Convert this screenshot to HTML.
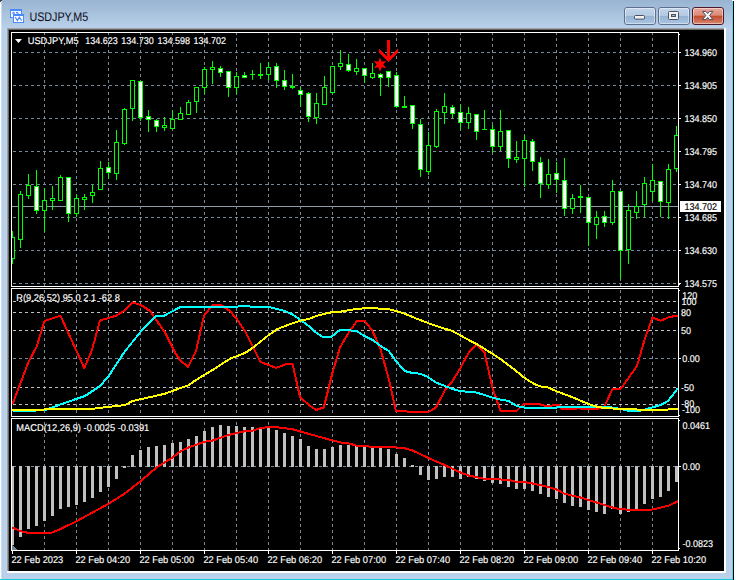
<!DOCTYPE html>
<html><head><meta charset="utf-8"><title>USDJPY,M5</title>
<style>html,body{margin:0;padding:0;background:#fff;}svg{display:block;}text{font-family:"Liberation Sans",sans-serif;white-space:pre;text-rendering:geometricPrecision;}</style>
</head><body>
<svg width="736" height="580" viewBox="0 0 736 580">
<defs>
<linearGradient id="tb" x1="0" y1="0" x2="0" y2="1"><stop offset="0" stop-color="#99b4d1"/><stop offset="1" stop-color="#b9d1ea"/></linearGradient>
<linearGradient id="bt" x1="0" y1="0" x2="0" y2="1"><stop offset="0" stop-color="#c3d6ea"/><stop offset="0.48" stop-color="#b3cae3"/><stop offset="0.5" stop-color="#96b2d3"/><stop offset="1" stop-color="#aac6e3"/></linearGradient>
<linearGradient id="cl" x1="0" y1="0" x2="0" y2="1"><stop offset="0" stop-color="#e9ab9e"/><stop offset="0.46" stop-color="#dc8a78"/><stop offset="0.5" stop-color="#c24a2c"/><stop offset="1" stop-color="#d98a72"/></linearGradient>
</defs>
<rect x="0" y="0" width="736" height="580" fill="#ffffff" />
<rect x="1" y="0" width="731" height="28" fill="url(#tb)" />
<rect x="1" y="28" width="731" height="551" fill="#b9d1ea" />
<rect x="1" y="0" width="1" height="579" fill="#c9dcf0" />
<rect x="732" y="0" width="1" height="580" fill="#55d7fa" />
<rect x="733" y="0" width="1" height="580" fill="#000000" />
<rect x="0" y="579" width="733" height="1" fill="#1ec8e1" />
<rect x="0" y="0" width="2" height="1" fill="#444" />
<rect x="0" y="1" width="1" height="1" fill="#444" />
<rect x="732" y="0" width="2" height="1" fill="#fff" />
<rect x="7" y="28" width="719" height="545" fill="#ffffff" />
<rect x="7" y="28" width="717" height="543" fill="#a0a0a0" />
<rect x="8" y="29" width="716" height="542" fill="#696969" />
<rect x="9" y="30" width="715" height="541" fill="#000000" />
<g shape-rendering="crispEdges">
<line x1="44.5" y1="33" x2="44.5" y2="286" stroke="#778899" stroke-width="1" stroke-dasharray="3 3" stroke-dashoffset="1"/>
<line x1="44.5" y1="289" x2="44.5" y2="416" stroke="#778899" stroke-width="1" stroke-dasharray="3 3" stroke-dashoffset="5"/>
<line x1="44.5" y1="419" x2="44.5" y2="550" stroke="#778899" stroke-width="1" stroke-dasharray="3 3" stroke-dashoffset="3"/>
<line x1="76.5" y1="33" x2="76.5" y2="286" stroke="#778899" stroke-width="1" stroke-dasharray="3 3" stroke-dashoffset="1"/>
<line x1="76.5" y1="289" x2="76.5" y2="416" stroke="#778899" stroke-width="1" stroke-dasharray="3 3" stroke-dashoffset="5"/>
<line x1="76.5" y1="419" x2="76.5" y2="550" stroke="#778899" stroke-width="1" stroke-dasharray="3 3" stroke-dashoffset="3"/>
<line x1="108.5" y1="33" x2="108.5" y2="286" stroke="#778899" stroke-width="1" stroke-dasharray="3 3" stroke-dashoffset="1"/>
<line x1="108.5" y1="289" x2="108.5" y2="416" stroke="#778899" stroke-width="1" stroke-dasharray="3 3" stroke-dashoffset="5"/>
<line x1="108.5" y1="419" x2="108.5" y2="550" stroke="#778899" stroke-width="1" stroke-dasharray="3 3" stroke-dashoffset="3"/>
<line x1="140.5" y1="33" x2="140.5" y2="286" stroke="#778899" stroke-width="1" stroke-dasharray="3 3" stroke-dashoffset="1"/>
<line x1="140.5" y1="289" x2="140.5" y2="416" stroke="#778899" stroke-width="1" stroke-dasharray="3 3" stroke-dashoffset="5"/>
<line x1="140.5" y1="419" x2="140.5" y2="550" stroke="#778899" stroke-width="1" stroke-dasharray="3 3" stroke-dashoffset="3"/>
<line x1="172.5" y1="33" x2="172.5" y2="286" stroke="#778899" stroke-width="1" stroke-dasharray="3 3" stroke-dashoffset="1"/>
<line x1="172.5" y1="289" x2="172.5" y2="416" stroke="#778899" stroke-width="1" stroke-dasharray="3 3" stroke-dashoffset="5"/>
<line x1="172.5" y1="419" x2="172.5" y2="550" stroke="#778899" stroke-width="1" stroke-dasharray="3 3" stroke-dashoffset="3"/>
<line x1="204.5" y1="33" x2="204.5" y2="286" stroke="#778899" stroke-width="1" stroke-dasharray="3 3" stroke-dashoffset="1"/>
<line x1="204.5" y1="289" x2="204.5" y2="416" stroke="#778899" stroke-width="1" stroke-dasharray="3 3" stroke-dashoffset="5"/>
<line x1="204.5" y1="419" x2="204.5" y2="550" stroke="#778899" stroke-width="1" stroke-dasharray="3 3" stroke-dashoffset="3"/>
<line x1="236.5" y1="33" x2="236.5" y2="286" stroke="#778899" stroke-width="1" stroke-dasharray="3 3" stroke-dashoffset="1"/>
<line x1="236.5" y1="289" x2="236.5" y2="416" stroke="#778899" stroke-width="1" stroke-dasharray="3 3" stroke-dashoffset="5"/>
<line x1="236.5" y1="419" x2="236.5" y2="550" stroke="#778899" stroke-width="1" stroke-dasharray="3 3" stroke-dashoffset="3"/>
<line x1="268.5" y1="33" x2="268.5" y2="286" stroke="#778899" stroke-width="1" stroke-dasharray="3 3" stroke-dashoffset="1"/>
<line x1="268.5" y1="289" x2="268.5" y2="416" stroke="#778899" stroke-width="1" stroke-dasharray="3 3" stroke-dashoffset="5"/>
<line x1="268.5" y1="419" x2="268.5" y2="550" stroke="#778899" stroke-width="1" stroke-dasharray="3 3" stroke-dashoffset="3"/>
<line x1="300.5" y1="33" x2="300.5" y2="286" stroke="#778899" stroke-width="1" stroke-dasharray="3 3" stroke-dashoffset="1"/>
<line x1="300.5" y1="289" x2="300.5" y2="416" stroke="#778899" stroke-width="1" stroke-dasharray="3 3" stroke-dashoffset="5"/>
<line x1="300.5" y1="419" x2="300.5" y2="550" stroke="#778899" stroke-width="1" stroke-dasharray="3 3" stroke-dashoffset="3"/>
<line x1="332.5" y1="33" x2="332.5" y2="286" stroke="#778899" stroke-width="1" stroke-dasharray="3 3" stroke-dashoffset="1"/>
<line x1="332.5" y1="289" x2="332.5" y2="416" stroke="#778899" stroke-width="1" stroke-dasharray="3 3" stroke-dashoffset="5"/>
<line x1="332.5" y1="419" x2="332.5" y2="550" stroke="#778899" stroke-width="1" stroke-dasharray="3 3" stroke-dashoffset="3"/>
<line x1="364.5" y1="33" x2="364.5" y2="286" stroke="#778899" stroke-width="1" stroke-dasharray="3 3" stroke-dashoffset="1"/>
<line x1="364.5" y1="289" x2="364.5" y2="416" stroke="#778899" stroke-width="1" stroke-dasharray="3 3" stroke-dashoffset="5"/>
<line x1="364.5" y1="419" x2="364.5" y2="550" stroke="#778899" stroke-width="1" stroke-dasharray="3 3" stroke-dashoffset="3"/>
<line x1="396.5" y1="33" x2="396.5" y2="286" stroke="#778899" stroke-width="1" stroke-dasharray="3 3" stroke-dashoffset="1"/>
<line x1="396.5" y1="289" x2="396.5" y2="416" stroke="#778899" stroke-width="1" stroke-dasharray="3 3" stroke-dashoffset="5"/>
<line x1="396.5" y1="419" x2="396.5" y2="550" stroke="#778899" stroke-width="1" stroke-dasharray="3 3" stroke-dashoffset="3"/>
<line x1="428.5" y1="33" x2="428.5" y2="286" stroke="#778899" stroke-width="1" stroke-dasharray="3 3" stroke-dashoffset="1"/>
<line x1="428.5" y1="289" x2="428.5" y2="416" stroke="#778899" stroke-width="1" stroke-dasharray="3 3" stroke-dashoffset="5"/>
<line x1="428.5" y1="419" x2="428.5" y2="550" stroke="#778899" stroke-width="1" stroke-dasharray="3 3" stroke-dashoffset="3"/>
<line x1="460.5" y1="33" x2="460.5" y2="286" stroke="#778899" stroke-width="1" stroke-dasharray="3 3" stroke-dashoffset="1"/>
<line x1="460.5" y1="289" x2="460.5" y2="416" stroke="#778899" stroke-width="1" stroke-dasharray="3 3" stroke-dashoffset="5"/>
<line x1="460.5" y1="419" x2="460.5" y2="550" stroke="#778899" stroke-width="1" stroke-dasharray="3 3" stroke-dashoffset="3"/>
<line x1="492.5" y1="33" x2="492.5" y2="286" stroke="#778899" stroke-width="1" stroke-dasharray="3 3" stroke-dashoffset="1"/>
<line x1="492.5" y1="289" x2="492.5" y2="416" stroke="#778899" stroke-width="1" stroke-dasharray="3 3" stroke-dashoffset="5"/>
<line x1="492.5" y1="419" x2="492.5" y2="550" stroke="#778899" stroke-width="1" stroke-dasharray="3 3" stroke-dashoffset="3"/>
<line x1="524.5" y1="33" x2="524.5" y2="286" stroke="#778899" stroke-width="1" stroke-dasharray="3 3" stroke-dashoffset="1"/>
<line x1="524.5" y1="289" x2="524.5" y2="416" stroke="#778899" stroke-width="1" stroke-dasharray="3 3" stroke-dashoffset="5"/>
<line x1="524.5" y1="419" x2="524.5" y2="550" stroke="#778899" stroke-width="1" stroke-dasharray="3 3" stroke-dashoffset="3"/>
<line x1="556.5" y1="33" x2="556.5" y2="286" stroke="#778899" stroke-width="1" stroke-dasharray="3 3" stroke-dashoffset="1"/>
<line x1="556.5" y1="289" x2="556.5" y2="416" stroke="#778899" stroke-width="1" stroke-dasharray="3 3" stroke-dashoffset="5"/>
<line x1="556.5" y1="419" x2="556.5" y2="550" stroke="#778899" stroke-width="1" stroke-dasharray="3 3" stroke-dashoffset="3"/>
<line x1="588.5" y1="33" x2="588.5" y2="286" stroke="#778899" stroke-width="1" stroke-dasharray="3 3" stroke-dashoffset="1"/>
<line x1="588.5" y1="289" x2="588.5" y2="416" stroke="#778899" stroke-width="1" stroke-dasharray="3 3" stroke-dashoffset="5"/>
<line x1="588.5" y1="419" x2="588.5" y2="550" stroke="#778899" stroke-width="1" stroke-dasharray="3 3" stroke-dashoffset="3"/>
<line x1="620.5" y1="33" x2="620.5" y2="286" stroke="#778899" stroke-width="1" stroke-dasharray="3 3" stroke-dashoffset="1"/>
<line x1="620.5" y1="289" x2="620.5" y2="416" stroke="#778899" stroke-width="1" stroke-dasharray="3 3" stroke-dashoffset="5"/>
<line x1="620.5" y1="419" x2="620.5" y2="550" stroke="#778899" stroke-width="1" stroke-dasharray="3 3" stroke-dashoffset="3"/>
<line x1="652.5" y1="33" x2="652.5" y2="286" stroke="#778899" stroke-width="1" stroke-dasharray="3 3" stroke-dashoffset="1"/>
<line x1="652.5" y1="289" x2="652.5" y2="416" stroke="#778899" stroke-width="1" stroke-dasharray="3 3" stroke-dashoffset="5"/>
<line x1="652.5" y1="419" x2="652.5" y2="550" stroke="#778899" stroke-width="1" stroke-dasharray="3 3" stroke-dashoffset="3"/>
<line x1="12" y1="52.5" x2="678" y2="52.5" stroke="#778899" stroke-width="1" stroke-dasharray="3 3" stroke-dashoffset="5"/>
<line x1="12" y1="85.5" x2="678" y2="85.5" stroke="#778899" stroke-width="1" stroke-dasharray="3 3" stroke-dashoffset="5"/>
<line x1="12" y1="118.5" x2="678" y2="118.5" stroke="#778899" stroke-width="1" stroke-dasharray="3 3" stroke-dashoffset="5"/>
<line x1="12" y1="151.5" x2="678" y2="151.5" stroke="#778899" stroke-width="1" stroke-dasharray="3 3" stroke-dashoffset="5"/>
<line x1="12" y1="184.5" x2="678" y2="184.5" stroke="#778899" stroke-width="1" stroke-dasharray="3 3" stroke-dashoffset="5"/>
<line x1="12" y1="217.5" x2="678" y2="217.5" stroke="#778899" stroke-width="1" stroke-dasharray="3 3" stroke-dashoffset="5"/>
<line x1="12" y1="250.5" x2="678" y2="250.5" stroke="#778899" stroke-width="1" stroke-dasharray="3 3" stroke-dashoffset="5"/>
<line x1="12" y1="283.5" x2="678" y2="283.5" stroke="#778899" stroke-width="1" stroke-dasharray="3 3" stroke-dashoffset="5"/>
<line x1="12" y1="301.5" x2="678" y2="301.5" stroke="#c0c0c0" stroke-width="1" stroke-dasharray="3 3" stroke-dashoffset="5"/>
<line x1="12" y1="312.5" x2="678" y2="312.5" stroke="#c0c0c0" stroke-width="1" stroke-dasharray="3 3" stroke-dashoffset="5"/>
<line x1="12" y1="330.5" x2="678" y2="330.5" stroke="#c0c0c0" stroke-width="1" stroke-dasharray="3 3" stroke-dashoffset="5"/>
<line x1="12" y1="387.5" x2="678" y2="387.5" stroke="#c0c0c0" stroke-width="1" stroke-dasharray="3 3" stroke-dashoffset="5"/>
<line x1="12" y1="404.5" x2="678" y2="404.5" stroke="#c0c0c0" stroke-width="1" stroke-dasharray="3 3" stroke-dashoffset="5"/>
<line x1="12" y1="358.5" x2="678" y2="358.5" stroke="#778899" stroke-width="1" stroke-dasharray="3 3" stroke-dashoffset="5"/>
<line x1="12" y1="466.5" x2="678" y2="466.5" stroke="#778899" stroke-width="1" stroke-dasharray="3 3" stroke-dashoffset="5"/>
<rect x="12" y="206" width="666" height="1" fill="#8c99a8" />
<clipPath id="c0"><rect x="12" y="33" width="667" height="253"/></clipPath>
<g clip-path="url(#c0)">
<rect x="12" y="231" width="1" height="33" fill="#00ff00"/>
<rect x="10.5" y="237.5" width="4" height="21" fill="#000000" stroke="#00ff00" stroke-width="1"/>
<rect x="20" y="191" width="1" height="57" fill="#00ff00"/>
<rect x="18.5" y="194.5" width="4" height="45" fill="#000000" stroke="#00ff00" stroke-width="1"/>
<rect x="28" y="174" width="1" height="25" fill="#00ff00"/>
<rect x="26.5" y="185.5" width="4" height="10" fill="#000000" stroke="#00ff00" stroke-width="1"/>
<rect x="36" y="170" width="1" height="44" fill="#00ff00"/>
<rect x="34.5" y="186.5" width="4" height="24" fill="#ffffff" stroke="#00ff00" stroke-width="1"/>
<rect x="44" y="188" width="1" height="44" fill="#00ff00"/>
<rect x="42.5" y="200.5" width="4" height="10" fill="#000000" stroke="#00ff00" stroke-width="1"/>
<rect x="52" y="186" width="1" height="24" fill="#00ff00"/>
<rect x="50.5" y="198.5" width="4" height="2" fill="#000000" stroke="#00ff00" stroke-width="1"/>
<rect x="60" y="175" width="1" height="26" fill="#00ff00"/>
<rect x="58.5" y="177.5" width="4" height="23" fill="#000000" stroke="#00ff00" stroke-width="1"/>
<rect x="68" y="177" width="1" height="45" fill="#00ff00"/>
<rect x="66.5" y="177.5" width="4" height="36" fill="#ffffff" stroke="#00ff00" stroke-width="1"/>
<rect x="76" y="194" width="1" height="23" fill="#00ff00"/>
<rect x="74.5" y="198.5" width="4" height="15" fill="#000000" stroke="#00ff00" stroke-width="1"/>
<rect x="84" y="194" width="1" height="16" fill="#00ff00"/>
<rect x="82.5" y="197.5" width="4" height="2" fill="#000000" stroke="#00ff00" stroke-width="1"/>
<rect x="92" y="185" width="1" height="18" fill="#00ff00"/>
<rect x="90.5" y="192.5" width="4" height="3" fill="#000000" stroke="#00ff00" stroke-width="1"/>
<rect x="100" y="161" width="1" height="29" fill="#00ff00"/>
<rect x="98.5" y="168.5" width="4" height="21" fill="#000000" stroke="#00ff00" stroke-width="1"/>
<rect x="108" y="162" width="1" height="17" fill="#00ff00"/>
<rect x="106.5" y="167.5" width="4" height="5" fill="#ffffff" stroke="#00ff00" stroke-width="1"/>
<rect x="116" y="130" width="1" height="50" fill="#00ff00"/>
<rect x="114.5" y="142.5" width="4" height="31" fill="#000000" stroke="#00ff00" stroke-width="1"/>
<rect x="124" y="108" width="1" height="37" fill="#00ff00"/>
<rect x="122.5" y="109.5" width="4" height="34" fill="#000000" stroke="#00ff00" stroke-width="1"/>
<rect x="132" y="80" width="1" height="41" fill="#00ff00"/>
<rect x="130.5" y="80.5" width="4" height="28" fill="#000000" stroke="#00ff00" stroke-width="1"/>
<rect x="140" y="81" width="1" height="40" fill="#00ff00"/>
<rect x="138.5" y="81.5" width="4" height="36" fill="#ffffff" stroke="#00ff00" stroke-width="1"/>
<rect x="148" y="110" width="1" height="22" fill="#00ff00"/>
<rect x="146.5" y="116.5" width="4" height="3" fill="#ffffff" stroke="#00ff00" stroke-width="1"/>
<rect x="156" y="119" width="1" height="13" fill="#00ff00"/>
<rect x="154.5" y="120.5" width="4" height="6" fill="#ffffff" stroke="#00ff00" stroke-width="1"/>
<rect x="164" y="117" width="1" height="14" fill="#00ff00"/>
<rect x="162.5" y="125.5" width="4" height="2" fill="#000000" stroke="#00ff00" stroke-width="1"/>
<rect x="172" y="110" width="1" height="19" fill="#00ff00"/>
<rect x="170.5" y="119.5" width="4" height="9" fill="#000000" stroke="#00ff00" stroke-width="1"/>
<rect x="180" y="107" width="1" height="13" fill="#00ff00"/>
<rect x="178.5" y="113.5" width="4" height="6" fill="#000000" stroke="#00ff00" stroke-width="1"/>
<rect x="188" y="100" width="1" height="15" fill="#00ff00"/>
<rect x="186.5" y="102.5" width="4" height="12" fill="#000000" stroke="#00ff00" stroke-width="1"/>
<rect x="196" y="87" width="1" height="26" fill="#00ff00"/>
<rect x="194.5" y="87.5" width="4" height="14" fill="#000000" stroke="#00ff00" stroke-width="1"/>
<rect x="204" y="67" width="1" height="27" fill="#00ff00"/>
<rect x="202.5" y="69.5" width="4" height="18" fill="#000000" stroke="#00ff00" stroke-width="1"/>
<rect x="212" y="61" width="1" height="23" fill="#00ff00"/>
<rect x="210.5" y="67.5" width="4" height="2" fill="#000000" stroke="#00ff00" stroke-width="1"/>
<rect x="220" y="66" width="1" height="11" fill="#00ff00"/>
<rect x="218.5" y="68.5" width="4" height="4" fill="#ffffff" stroke="#00ff00" stroke-width="1"/>
<rect x="228" y="71" width="1" height="26" fill="#00ff00"/>
<rect x="226.5" y="71.5" width="4" height="16" fill="#ffffff" stroke="#00ff00" stroke-width="1"/>
<rect x="236" y="72" width="1" height="22" fill="#00ff00"/>
<rect x="234.5" y="76.5" width="4" height="11" fill="#000000" stroke="#00ff00" stroke-width="1"/>
<rect x="244" y="72" width="1" height="6" fill="#00ff00"/>
<rect x="242.5" y="75.5" width="4" height="2" fill="#ffffff" stroke="#00ff00" stroke-width="1"/>
<rect x="252" y="70" width="1" height="10" fill="#00ff00"/>
<rect x="250" y="74" width="5" height="1" fill="#00ff00" />
<rect x="260" y="63" width="1" height="16" fill="#00ff00"/>
<rect x="258.5" y="74.5" width="4" height="1" fill="#000000" stroke="#00ff00" stroke-width="1"/>
<rect x="268" y="62" width="1" height="18" fill="#00ff00"/>
<rect x="266.5" y="67.5" width="4" height="7" fill="#000000" stroke="#00ff00" stroke-width="1"/>
<rect x="276" y="63" width="1" height="25" fill="#00ff00"/>
<rect x="274.5" y="66.5" width="4" height="14" fill="#ffffff" stroke="#00ff00" stroke-width="1"/>
<rect x="284" y="70" width="1" height="20" fill="#00ff00"/>
<rect x="282.5" y="80.5" width="4" height="6" fill="#ffffff" stroke="#00ff00" stroke-width="1"/>
<rect x="292" y="74" width="1" height="15" fill="#00ff00"/>
<rect x="290.5" y="86.5" width="4" height="1" fill="#ffffff" stroke="#00ff00" stroke-width="1"/>
<rect x="300" y="87" width="1" height="20" fill="#00ff00"/>
<rect x="298.5" y="90.5" width="4" height="4" fill="#ffffff" stroke="#00ff00" stroke-width="1"/>
<rect x="308" y="92" width="1" height="30" fill="#00ff00"/>
<rect x="306.5" y="93.5" width="4" height="23" fill="#ffffff" stroke="#00ff00" stroke-width="1"/>
<rect x="316" y="93" width="1" height="31" fill="#00ff00"/>
<rect x="314.5" y="103.5" width="4" height="14" fill="#000000" stroke="#00ff00" stroke-width="1"/>
<rect x="324" y="76" width="1" height="29" fill="#00ff00"/>
<rect x="322.5" y="87.5" width="4" height="17" fill="#000000" stroke="#00ff00" stroke-width="1"/>
<rect x="332" y="66" width="1" height="28" fill="#00ff00"/>
<rect x="330.5" y="66.5" width="4" height="26" fill="#000000" stroke="#00ff00" stroke-width="1"/>
<rect x="340" y="50" width="1" height="20" fill="#00ff00"/>
<rect x="338.5" y="63.5" width="4" height="3" fill="#000000" stroke="#00ff00" stroke-width="1"/>
<rect x="348" y="54" width="1" height="18" fill="#00ff00"/>
<rect x="346.5" y="64.5" width="4" height="6" fill="#ffffff" stroke="#00ff00" stroke-width="1"/>
<rect x="356" y="59" width="1" height="16" fill="#00ff00"/>
<rect x="354.5" y="68.5" width="4" height="3" fill="#000000" stroke="#00ff00" stroke-width="1"/>
<rect x="364" y="68" width="1" height="15" fill="#00ff00"/>
<rect x="362.5" y="68.5" width="4" height="7" fill="#ffffff" stroke="#00ff00" stroke-width="1"/>
<rect x="372" y="63" width="1" height="16" fill="#00ff00"/>
<rect x="370.5" y="73.5" width="4" height="4" fill="#000000" stroke="#00ff00" stroke-width="1"/>
<rect x="380" y="73" width="1" height="23" fill="#00ff00"/>
<rect x="378.5" y="74.5" width="4" height="3" fill="#ffffff" stroke="#00ff00" stroke-width="1"/>
<rect x="388" y="71" width="1" height="16" fill="#00ff00"/>
<rect x="386.5" y="71.5" width="4" height="6" fill="#ffffff" stroke="#00ff00" stroke-width="1"/>
<rect x="396" y="72" width="1" height="36" fill="#00ff00"/>
<rect x="394.5" y="75.5" width="4" height="31" fill="#ffffff" stroke="#00ff00" stroke-width="1"/>
<rect x="404" y="96" width="1" height="12" fill="#00ff00"/>
<rect x="402.5" y="106.5" width="4" height="1" fill="#000000" stroke="#00ff00" stroke-width="1"/>
<rect x="412" y="105" width="1" height="24" fill="#00ff00"/>
<rect x="410.5" y="105.5" width="4" height="18" fill="#ffffff" stroke="#00ff00" stroke-width="1"/>
<rect x="420" y="119" width="1" height="58" fill="#00ff00"/>
<rect x="418.5" y="124.5" width="4" height="45" fill="#ffffff" stroke="#00ff00" stroke-width="1"/>
<rect x="428" y="132" width="1" height="43" fill="#00ff00"/>
<rect x="426.5" y="145.5" width="4" height="26" fill="#000000" stroke="#00ff00" stroke-width="1"/>
<rect x="436" y="109" width="1" height="39" fill="#00ff00"/>
<rect x="434.5" y="111.5" width="4" height="35" fill="#000000" stroke="#00ff00" stroke-width="1"/>
<rect x="444" y="93" width="1" height="31" fill="#00ff00"/>
<rect x="442.5" y="106.5" width="4" height="6" fill="#000000" stroke="#00ff00" stroke-width="1"/>
<rect x="452" y="105" width="1" height="13" fill="#00ff00"/>
<rect x="450.5" y="107.5" width="4" height="6" fill="#ffffff" stroke="#00ff00" stroke-width="1"/>
<rect x="460" y="104" width="1" height="26" fill="#00ff00"/>
<rect x="458.5" y="112.5" width="4" height="10" fill="#ffffff" stroke="#00ff00" stroke-width="1"/>
<rect x="468" y="107" width="1" height="22" fill="#00ff00"/>
<rect x="466.5" y="113.5" width="4" height="9" fill="#000000" stroke="#00ff00" stroke-width="1"/>
<rect x="476" y="114" width="1" height="26" fill="#00ff00"/>
<rect x="474.5" y="114.5" width="4" height="17" fill="#ffffff" stroke="#00ff00" stroke-width="1"/>
<rect x="484" y="110" width="1" height="20" fill="#00ff00"/>
<rect x="482" y="129" width="5" height="1" fill="#00ff00" />
<rect x="492" y="125" width="1" height="28" fill="#00ff00"/>
<rect x="490.5" y="129.5" width="4" height="17" fill="#ffffff" stroke="#00ff00" stroke-width="1"/>
<rect x="500" y="110" width="1" height="41" fill="#00ff00"/>
<rect x="498.5" y="131.5" width="4" height="15" fill="#000000" stroke="#00ff00" stroke-width="1"/>
<rect x="508" y="130" width="1" height="38" fill="#00ff00"/>
<rect x="506.5" y="130.5" width="4" height="28" fill="#ffffff" stroke="#00ff00" stroke-width="1"/>
<rect x="516" y="141" width="1" height="22" fill="#00ff00"/>
<rect x="514.5" y="157.5" width="4" height="2" fill="#000000" stroke="#00ff00" stroke-width="1"/>
<rect x="524" y="135" width="1" height="52" fill="#00ff00"/>
<rect x="522.5" y="140.5" width="4" height="18" fill="#000000" stroke="#00ff00" stroke-width="1"/>
<rect x="532" y="139" width="1" height="32" fill="#00ff00"/>
<rect x="530.5" y="141.5" width="4" height="20" fill="#ffffff" stroke="#00ff00" stroke-width="1"/>
<rect x="540" y="157" width="1" height="41" fill="#00ff00"/>
<rect x="538.5" y="162.5" width="4" height="21" fill="#ffffff" stroke="#00ff00" stroke-width="1"/>
<rect x="548" y="159" width="1" height="30" fill="#00ff00"/>
<rect x="546.5" y="174.5" width="4" height="10" fill="#000000" stroke="#00ff00" stroke-width="1"/>
<rect x="556" y="162" width="1" height="31" fill="#00ff00"/>
<rect x="554.5" y="173.5" width="4" height="6" fill="#ffffff" stroke="#00ff00" stroke-width="1"/>
<rect x="564" y="158" width="1" height="58" fill="#00ff00"/>
<rect x="562.5" y="180.5" width="4" height="28" fill="#ffffff" stroke="#00ff00" stroke-width="1"/>
<rect x="572" y="194" width="1" height="20" fill="#00ff00"/>
<rect x="570.5" y="198.5" width="4" height="10" fill="#000000" stroke="#00ff00" stroke-width="1"/>
<rect x="580" y="185" width="1" height="28" fill="#00ff00"/>
<rect x="578.5" y="196.5" width="4" height="1" fill="#000000" stroke="#00ff00" stroke-width="1"/>
<rect x="588" y="197" width="1" height="49" fill="#00ff00"/>
<rect x="586.5" y="197.5" width="4" height="25" fill="#ffffff" stroke="#00ff00" stroke-width="1"/>
<rect x="596" y="211" width="1" height="28" fill="#00ff00"/>
<rect x="594.5" y="217.5" width="4" height="7" fill="#000000" stroke="#00ff00" stroke-width="1"/>
<rect x="604" y="211" width="1" height="16" fill="#00ff00"/>
<rect x="602.5" y="216.5" width="4" height="6" fill="#ffffff" stroke="#00ff00" stroke-width="1"/>
<rect x="612" y="180" width="1" height="45" fill="#00ff00"/>
<rect x="610.5" y="191.5" width="4" height="31" fill="#000000" stroke="#00ff00" stroke-width="1"/>
<rect x="620" y="191" width="1" height="88" fill="#00ff00"/>
<rect x="618.5" y="191.5" width="4" height="59" fill="#ffffff" stroke="#00ff00" stroke-width="1"/>
<rect x="628" y="204" width="1" height="60" fill="#00ff00"/>
<rect x="626.5" y="210.5" width="4" height="39" fill="#000000" stroke="#00ff00" stroke-width="1"/>
<rect x="636" y="191" width="1" height="28" fill="#00ff00"/>
<rect x="634.5" y="206.5" width="4" height="6" fill="#000000" stroke="#00ff00" stroke-width="1"/>
<rect x="644" y="177" width="1" height="40" fill="#00ff00"/>
<rect x="642.5" y="183.5" width="4" height="21" fill="#000000" stroke="#00ff00" stroke-width="1"/>
<rect x="652" y="164" width="1" height="37" fill="#00ff00"/>
<rect x="650.5" y="180.5" width="4" height="11" fill="#000000" stroke="#00ff00" stroke-width="1"/>
<rect x="660" y="181" width="1" height="36" fill="#00ff00"/>
<rect x="658.5" y="181.5" width="4" height="20" fill="#ffffff" stroke="#00ff00" stroke-width="1"/>
<rect x="668" y="164" width="1" height="55" fill="#00ff00"/>
<rect x="666.5" y="169.5" width="4" height="33" fill="#000000" stroke="#00ff00" stroke-width="1"/>
<rect x="676" y="126" width="1" height="46" fill="#00ff00"/>
<rect x="674.5" y="135.5" width="4" height="33" fill="#000000" stroke="#00ff00" stroke-width="1"/>
</g>
<rect x="11" y="466" width="3" height="79" fill="#c0c0c0" />
<rect x="19" y="466" width="3" height="71" fill="#c0c0c0" />
<rect x="27" y="466" width="3" height="63" fill="#c0c0c0" />
<rect x="35" y="466" width="3" height="60" fill="#c0c0c0" />
<rect x="43" y="466" width="3" height="55" fill="#c0c0c0" />
<rect x="51" y="466" width="3" height="50" fill="#c0c0c0" />
<rect x="59" y="466" width="3" height="43" fill="#c0c0c0" />
<rect x="67" y="466" width="3" height="41" fill="#c0c0c0" />
<rect x="75" y="466" width="3" height="39" fill="#c0c0c0" />
<rect x="83" y="466" width="3" height="36" fill="#c0c0c0" />
<rect x="91" y="466" width="3" height="32" fill="#c0c0c0" />
<rect x="99" y="466" width="3" height="26" fill="#c0c0c0" />
<rect x="107" y="466" width="3" height="21" fill="#c0c0c0" />
<rect x="115" y="466" width="3" height="13" fill="#c0c0c0" />
<rect x="123" y="466" width="3" height="2" fill="#c0c0c0" />
<rect x="131" y="455" width="3" height="12" fill="#c0c0c0" />
<rect x="139" y="450" width="3" height="17" fill="#c0c0c0" />
<rect x="147" y="447" width="3" height="20" fill="#c0c0c0" />
<rect x="155" y="446" width="3" height="21" fill="#c0c0c0" />
<rect x="163" y="445" width="3" height="22" fill="#c0c0c0" />
<rect x="171" y="443" width="3" height="24" fill="#c0c0c0" />
<rect x="179" y="442" width="3" height="25" fill="#c0c0c0" />
<rect x="187" y="439" width="3" height="28" fill="#c0c0c0" />
<rect x="195" y="436" width="3" height="31" fill="#c0c0c0" />
<rect x="203" y="431" width="3" height="36" fill="#c0c0c0" />
<rect x="211" y="427" width="3" height="40" fill="#c0c0c0" />
<rect x="219" y="425" width="3" height="42" fill="#c0c0c0" />
<rect x="227" y="426" width="3" height="41" fill="#c0c0c0" />
<rect x="235" y="426" width="3" height="41" fill="#c0c0c0" />
<rect x="243" y="427" width="3" height="40" fill="#c0c0c0" />
<rect x="251" y="427" width="3" height="40" fill="#c0c0c0" />
<rect x="259" y="427" width="3" height="40" fill="#c0c0c0" />
<rect x="267" y="427" width="3" height="40" fill="#c0c0c0" />
<rect x="275" y="430" width="3" height="37" fill="#c0c0c0" />
<rect x="283" y="433" width="3" height="34" fill="#c0c0c0" />
<rect x="291" y="436" width="3" height="31" fill="#c0c0c0" />
<rect x="299" y="439" width="3" height="28" fill="#c0c0c0" />
<rect x="307" y="446" width="3" height="21" fill="#c0c0c0" />
<rect x="315" y="449" width="3" height="18" fill="#c0c0c0" />
<rect x="323" y="449" width="3" height="18" fill="#c0c0c0" />
<rect x="331" y="447" width="3" height="20" fill="#c0c0c0" />
<rect x="339" y="445" width="3" height="22" fill="#c0c0c0" />
<rect x="347" y="445" width="3" height="22" fill="#c0c0c0" />
<rect x="355" y="446" width="3" height="21" fill="#c0c0c0" />
<rect x="363" y="447" width="3" height="20" fill="#c0c0c0" />
<rect x="371" y="447" width="3" height="20" fill="#c0c0c0" />
<rect x="379" y="448" width="3" height="19" fill="#c0c0c0" />
<rect x="387" y="449" width="3" height="18" fill="#c0c0c0" />
<rect x="395" y="454" width="3" height="13" fill="#c0c0c0" />
<rect x="403" y="458" width="3" height="9" fill="#c0c0c0" />
<rect x="411" y="465" width="3" height="2" fill="#c0c0c0" />
<rect x="419" y="466" width="3" height="9" fill="#c0c0c0" />
<rect x="427" y="466" width="3" height="14" fill="#c0c0c0" />
<rect x="435" y="466" width="3" height="13" fill="#c0c0c0" />
<rect x="443" y="466" width="3" height="11" fill="#c0c0c0" />
<rect x="451" y="466" width="3" height="11" fill="#c0c0c0" />
<rect x="459" y="466" width="3" height="13" fill="#c0c0c0" />
<rect x="467" y="466" width="3" height="11" fill="#c0c0c0" />
<rect x="475" y="466" width="3" height="13" fill="#c0c0c0" />
<rect x="483" y="466" width="3" height="15" fill="#c0c0c0" />
<rect x="491" y="466" width="3" height="17" fill="#c0c0c0" />
<rect x="499" y="466" width="3" height="18" fill="#c0c0c0" />
<rect x="507" y="466" width="3" height="21" fill="#c0c0c0" />
<rect x="515" y="466" width="3" height="23" fill="#c0c0c0" />
<rect x="523" y="466" width="3" height="23" fill="#c0c0c0" />
<rect x="531" y="466" width="3" height="25" fill="#c0c0c0" />
<rect x="539" y="466" width="3" height="28" fill="#c0c0c0" />
<rect x="547" y="466" width="3" height="31" fill="#c0c0c0" />
<rect x="555" y="466" width="3" height="33" fill="#c0c0c0" />
<rect x="563" y="466" width="3" height="37" fill="#c0c0c0" />
<rect x="571" y="466" width="3" height="40" fill="#c0c0c0" />
<rect x="579" y="466" width="3" height="41" fill="#c0c0c0" />
<rect x="587" y="466" width="3" height="44" fill="#c0c0c0" />
<rect x="595" y="466" width="3" height="46" fill="#c0c0c0" />
<rect x="603" y="466" width="3" height="48" fill="#c0c0c0" />
<rect x="611" y="466" width="3" height="43" fill="#c0c0c0" />
<rect x="619" y="466" width="3" height="48" fill="#c0c0c0" />
<rect x="627" y="466" width="3" height="46" fill="#c0c0c0" />
<rect x="635" y="466" width="3" height="43" fill="#c0c0c0" />
<rect x="643" y="466" width="3" height="38" fill="#c0c0c0" />
<rect x="651" y="466" width="3" height="33" fill="#c0c0c0" />
<rect x="659" y="466" width="3" height="31" fill="#c0c0c0" />
<rect x="667" y="466" width="3" height="25" fill="#c0c0c0" />
<rect x="675" y="466" width="3" height="16" fill="#c0c0c0" />
</g>
<clipPath id="c1"><rect x="12" y="289" width="666" height="127"/></clipPath>
<clipPath id="c2"><rect x="12" y="419" width="666" height="131"/></clipPath>
<g clip-path="url(#c1)">
<polyline points="12.50,404.00 20.50,383.00 28.50,362.00 36.50,347.00 44.50,321.00 60.50,315.75 84.25,368.00 92.00,350.00 100.00,320.50 116.00,315.75 124.00,311.00 132.50,302.50 141.00,305.00 150.00,311.00 165.00,332.50 175.00,352.50 180.00,360.00 188.00,367.00 196.00,351.00 204.00,315.75 212.50,305.00 221.00,305.00 230.00,311.00 237.50,320.00 245.00,331.00 252.50,346.00 260.50,362.00 268.75,365.00 276.00,368.00 285.00,364.50 292.50,363.75 300.00,397.00 308.75,405.00 316.00,410.00 323.75,407.50 332.50,372.50 340.00,347.50 348.75,332.50 357.00,321.00 364.50,320.75 372.00,330.00 380.00,347.50 388.75,378.75 396.00,411.00 412.50,411.75 427.50,412.50 436.00,407.50 445.00,390.00 452.50,381.00 460.00,368.75 468.75,352.50 476.00,344.50 484.50,352.50 492.50,388.00 500.50,410.90 516.60,410.90 523.30,404.20 539.50,404.20 545.00,405.80 551.00,405.80 555.60,404.60 559.00,405.00 562.00,409.00 571.80,409.40 579.40,408.00 581.00,409.00 596.50,409.40 604.50,406.50 612.50,388.75 620.75,388.75 637.00,366.00 644.50,340.00 652.50,317.50 660.75,320.75 668.00,317.50 676.00,315.75 678.00,315.50" fill="none" stroke="#ff0000" stroke-width="2" stroke-linejoin="round" shape-rendering="crispEdges"/>
<polyline points="12.50,410.50 36.00,410.50 44.50,410.20 52.50,407.50 60.50,404.30 85.00,396.00 100.00,386.00 108.75,376.00 124.00,352.50 140.00,332.50 156.00,315.75 164.00,315.75 170.00,312.50 181.00,306.75 236.00,306.75 244.00,305.75 252.00,306.75 268.75,307.00 285.00,311.00 292.50,314.50 300.00,319.50 308.75,326.00 316.00,332.50 323.75,337.50 331.00,337.00 340.00,330.00 356.00,330.75 364.50,336.00 372.50,340.00 380.00,345.50 388.75,351.00 396.00,361.00 404.50,371.00 412.50,373.00 420.00,373.75 427.50,376.75 436.00,382.50 445.00,386.00 452.50,389.00 460.00,391.00 476.00,392.50 484.50,395.00 492.00,397.50 500.00,399.50 508.75,401.00 516.60,406.00 525.00,407.70 556.60,407.70 560.00,406.50 596.50,406.50 611.70,407.50 620.75,409.00 629.50,411.00 639.50,411.00 652.00,407.50 660.75,405.00 668.00,401.00 676.00,390.75 678.00,388.00" fill="none" stroke="#00ffff" stroke-width="2" stroke-linejoin="round" shape-rendering="crispEdges"/>
<polyline points="12.50,410.00 92.50,408.75 125.00,405.00 132.50,401.00 165.00,393.75 170.00,391.75 188.00,385.50 196.00,380.00 212.50,370.00 230.00,358.75 245.00,353.00 252.50,348.00 268.75,335.00 277.50,329.00 285.00,326.00 300.00,320.75 308.75,319.00 316.00,316.00 332.50,312.00 340.00,311.75 356.00,309.00 367.50,308.00 387.50,309.00 396.00,311.00 404.50,313.75 420.00,320.00 436.00,326.00 452.50,331.00 468.75,340.00 476.00,343.75 484.50,348.75 500.00,358.75 515.00,370.00 524.00,377.60 533.70,383.70 540.40,386.50 547.00,387.00 556.60,391.30 571.80,397.00 589.00,404.20 596.50,406.50 604.00,408.00 621.00,409.00 637.00,409.50 668.00,409.50 676.00,408.75 678.00,408.60" fill="none" stroke="#ffff00" stroke-width="2" stroke-linejoin="round" shape-rendering="crispEdges"/>
</g>
<g clip-path="url(#c2)">
<polyline points="12.50,527.50 20.50,531.25 28.75,533.00 51.00,533.00 60.00,529.25 76.50,521.25 92.50,512.50 108.50,503.75 124.50,493.75 140.50,481.25 156.50,467.50 172.50,457.50 180.50,451.25 188.50,447.50 204.50,441.75 212.50,440.50 228.50,435.00 244.50,431.25 252.50,430.75 260.50,428.00 272.50,426.75 292.50,429.25 308.50,433.75 324.50,438.25 340.50,442.50 348.50,443.25 356.50,445.75 372.50,446.75 396.50,447.50 404.50,448.25 412.50,450.50 428.50,458.00 444.50,465.00 460.50,472.50 468.50,475.50 484.50,478.75 500.50,479.50 508.50,480.00 516.50,481.75 524.50,482.00 532.50,483.50 548.50,487.00 556.50,489.50 564.50,493.75 580.50,497.50 596.50,502.50 612.50,507.50 620.50,509.25 636.50,510.00 652.50,509.50 668.50,505.75 676.50,502.00 678.00,501.20" fill="none" stroke="#ff0000" stroke-width="2" stroke-linejoin="round" shape-rendering="crispEdges"/>
</g>
<polygon points="379,48.8 387,56.8 387,39.8 390.2,39.8 390.2,56.8 398.3,48.7 398.3,52.6 388.6,61.8 379,52.8" fill="#ff0000" shape-rendering="crispEdges"/>
<polygon points="380.00,57.20 381.65,61.64 386.32,60.85 383.30,64.50 386.32,68.15 381.65,67.36 380.00,71.80 378.35,67.36 373.68,68.15 376.70,64.50 373.68,60.85 378.35,61.64" fill="#ff0000"/>
<g shape-rendering="crispEdges">
<rect x="11" y="32" width="668" height="1" fill="#fff" />
<rect x="11" y="286" width="668" height="1" fill="#fff" />
<rect x="11" y="32" width="1" height="255" fill="#fff"/>
<rect x="678" y="32" width="1" height="255" fill="#fff"/>
<rect x="11" y="288" width="668" height="1" fill="#fff" />
<rect x="11" y="416" width="668" height="1" fill="#fff" />
<rect x="11" y="288" width="1" height="129" fill="#fff"/>
<rect x="678" y="288" width="1" height="129" fill="#fff"/>
<rect x="11" y="418" width="668" height="1" fill="#fff" />
<rect x="11" y="550" width="668" height="1" fill="#fff" />
<rect x="11" y="418" width="1" height="133" fill="#fff"/>
<rect x="678" y="418" width="1" height="133" fill="#fff"/>
<rect x="679" y="52" width="2" height="1" fill="#fff" />
<rect x="679" y="85" width="2" height="1" fill="#fff" />
<rect x="679" y="118" width="2" height="1" fill="#fff" />
<rect x="679" y="151" width="2" height="1" fill="#fff" />
<rect x="679" y="184" width="2" height="1" fill="#fff" />
<rect x="679" y="217" width="2" height="1" fill="#fff" />
<rect x="679" y="250" width="2" height="1" fill="#fff" />
<rect x="679" y="283" width="2" height="1" fill="#fff" />
<rect x="679" y="358" width="2" height="1" fill="#fff" />
<rect x="679" y="466" width="2" height="1" fill="#fff" />
<rect x="679" y="34" width="1" height="1" fill="#fff" />
<rect x="679" y="284" width="1" height="1" fill="#fff" />
<rect x="679" y="290" width="1" height="1" fill="#fff" />
<rect x="679" y="415" width="1" height="1" fill="#fff" />
<rect x="679" y="420" width="1" height="1" fill="#fff" />
<rect x="679" y="548" width="1" height="1" fill="#fff" />
<rect x="12" y="551" width="1" height="3" fill="#fff"/>
<rect x="76" y="551" width="1" height="3" fill="#fff"/>
<rect x="140" y="551" width="1" height="3" fill="#fff"/>
<rect x="204" y="551" width="1" height="3" fill="#fff"/>
<rect x="268" y="551" width="1" height="3" fill="#fff"/>
<rect x="332" y="551" width="1" height="3" fill="#fff"/>
<rect x="396" y="551" width="1" height="3" fill="#fff"/>
<rect x="460" y="551" width="1" height="3" fill="#fff"/>
<rect x="524" y="551" width="1" height="3" fill="#fff"/>
<rect x="588" y="551" width="1" height="3" fill="#fff"/>
<rect x="652" y="551" width="1" height="3" fill="#fff"/>
<polygon points="12,545 12,550 17,550" fill="#778899"/>
</g>
<text x="684.5" y="55.8" font-size="9.8" fill="#fff" stroke="#fff" stroke-width="0.15" textLength="32.5" lengthAdjust="spacingAndGlyphs" >134.960</text>
<text x="684.5" y="88.8" font-size="9.8" fill="#fff" stroke="#fff" stroke-width="0.15" textLength="32.5" lengthAdjust="spacingAndGlyphs" >134.905</text>
<text x="684.5" y="121.8" font-size="9.8" fill="#fff" stroke="#fff" stroke-width="0.15" textLength="32.5" lengthAdjust="spacingAndGlyphs" >134.850</text>
<text x="684.5" y="154.8" font-size="9.8" fill="#fff" stroke="#fff" stroke-width="0.15" textLength="32.5" lengthAdjust="spacingAndGlyphs" >134.795</text>
<text x="684.5" y="187.8" font-size="9.8" fill="#fff" stroke="#fff" stroke-width="0.15" textLength="32.5" lengthAdjust="spacingAndGlyphs" >134.740</text>
<text x="684.5" y="220.8" font-size="9.8" fill="#fff" stroke="#fff" stroke-width="0.15" textLength="32.5" lengthAdjust="spacingAndGlyphs" >134.685</text>
<text x="684.5" y="253.8" font-size="9.8" fill="#fff" stroke="#fff" stroke-width="0.15" textLength="32.5" lengthAdjust="spacingAndGlyphs" >134.630</text>
<text x="684.5" y="286.8" font-size="9.8" fill="#fff" stroke="#fff" stroke-width="0.15" textLength="32.5" lengthAdjust="spacingAndGlyphs" >134.575</text>
<rect x="680" y="201" width="41" height="11" fill="#ffffff" />
<text x="684.5" y="209.8" font-size="9.8" fill="#000" stroke="#000" stroke-width="0.15" textLength="32.5" lengthAdjust="spacingAndGlyphs" >134.702</text>
<text x="682.2" y="298.8" font-size="9.8" fill="#fff" stroke="#fff" stroke-width="0.15" textLength="15" lengthAdjust="spacingAndGlyphs" >120</text>
<text x="681.4" y="305.1" font-size="9.8" fill="#fff" stroke="#fff" stroke-width="0.15" textLength="15" lengthAdjust="spacingAndGlyphs" >100</text>
<text x="681" y="315.9" font-size="9.8" fill="#fff" stroke="#fff" stroke-width="0.15" textLength="10" lengthAdjust="spacingAndGlyphs" >80</text>
<text x="681" y="334.0" font-size="9.8" fill="#fff" stroke="#fff" stroke-width="0.15" textLength="10" lengthAdjust="spacingAndGlyphs" >50</text>
<text x="682.2" y="362.0" font-size="9.8" fill="#fff" stroke="#fff" stroke-width="0.15" textLength="17.5" lengthAdjust="spacingAndGlyphs" >0.00</text>
<text x="681" y="391.3" font-size="9.8" fill="#fff" stroke="#fff" stroke-width="0.15" textLength="13" lengthAdjust="spacingAndGlyphs" >-50</text>
<text x="681.2" y="407.3" font-size="9.8" fill="#fff" stroke="#fff" stroke-width="0.15" textLength="13" lengthAdjust="spacingAndGlyphs" >-80</text>
<text x="681.9" y="413.0" font-size="9.8" fill="#fff" stroke="#fff" stroke-width="0.15" textLength="18" lengthAdjust="spacingAndGlyphs" >-100</text>
<text x="682.4" y="428.9" font-size="9.8" fill="#fff" stroke="#fff" stroke-width="0.15" textLength="27.6" lengthAdjust="spacingAndGlyphs" >0.0461</text>
<text x="682.4" y="470.0" font-size="9.8" fill="#fff" stroke="#fff" stroke-width="0.15" textLength="17.5" lengthAdjust="spacingAndGlyphs" >0.00</text>
<text x="682.4" y="547.3" font-size="9.8" fill="#fff" stroke="#fff" stroke-width="0.15" textLength="30.6" lengthAdjust="spacingAndGlyphs" >-0.0823</text>
<polygon points="15,39 22,39 18.5,43" fill="#fff"/>
<text x="27.7" y="43.7" font-size="9.8" fill="#fff" stroke="#fff" stroke-width="0.15" textLength="51" lengthAdjust="spacingAndGlyphs" >USDJPY,M5</text>
<text x="85.2" y="43.7" font-size="9.8" fill="#fff" stroke="#fff" stroke-width="0.15" textLength="32.6" lengthAdjust="spacingAndGlyphs" >134.623</text>
<text x="121.30000000000001" y="43.7" font-size="9.8" fill="#fff" stroke="#fff" stroke-width="0.15" textLength="32.6" lengthAdjust="spacingAndGlyphs" >134.730</text>
<text x="157.4" y="43.7" font-size="9.8" fill="#fff" stroke="#fff" stroke-width="0.15" textLength="32.6" lengthAdjust="spacingAndGlyphs" >134.598</text>
<text x="193.5" y="43.7" font-size="9.8" fill="#fff" stroke="#fff" stroke-width="0.15" textLength="32.6" lengthAdjust="spacingAndGlyphs" >134.702</text>
<text x="16.3" y="301.3" font-size="9.8" fill="#fff" stroke="#fff" stroke-width="0.15" textLength="103.5" lengthAdjust="spacingAndGlyphs" >R(9,26,52) 95.0 2.1 -62.8</text>
<text x="16.3" y="431.3" font-size="9.8" fill="#fff" stroke="#fff" stroke-width="0.15" textLength="133" lengthAdjust="spacingAndGlyphs" >MACD(12,26,9) -0.0025 -0.0391</text>
<text x="11.4" y="562.8" font-size="9.8" fill="#fff" stroke="#fff" stroke-width="0.15" textLength="51.8" lengthAdjust="spacingAndGlyphs" >22 Feb 2023</text>
<text x="75.4" y="562.8" font-size="9.8" fill="#fff" stroke="#fff" stroke-width="0.15" textLength="54.7" lengthAdjust="spacingAndGlyphs" >22 Feb 04:20</text>
<text x="139.4" y="562.8" font-size="9.8" fill="#fff" stroke="#fff" stroke-width="0.15" textLength="54.7" lengthAdjust="spacingAndGlyphs" >22 Feb 05:00</text>
<text x="203.4" y="562.8" font-size="9.8" fill="#fff" stroke="#fff" stroke-width="0.15" textLength="54.7" lengthAdjust="spacingAndGlyphs" >22 Feb 05:40</text>
<text x="267.4" y="562.8" font-size="9.8" fill="#fff" stroke="#fff" stroke-width="0.15" textLength="54.7" lengthAdjust="spacingAndGlyphs" >22 Feb 06:20</text>
<text x="331.4" y="562.8" font-size="9.8" fill="#fff" stroke="#fff" stroke-width="0.15" textLength="54.7" lengthAdjust="spacingAndGlyphs" >22 Feb 07:00</text>
<text x="395.4" y="562.8" font-size="9.8" fill="#fff" stroke="#fff" stroke-width="0.15" textLength="54.7" lengthAdjust="spacingAndGlyphs" >22 Feb 07:40</text>
<text x="459.4" y="562.8" font-size="9.8" fill="#fff" stroke="#fff" stroke-width="0.15" textLength="54.7" lengthAdjust="spacingAndGlyphs" >22 Feb 08:20</text>
<text x="523.4" y="562.8" font-size="9.8" fill="#fff" stroke="#fff" stroke-width="0.15" textLength="54.7" lengthAdjust="spacingAndGlyphs" >22 Feb 09:00</text>
<text x="587.4" y="562.8" font-size="9.8" fill="#fff" stroke="#fff" stroke-width="0.15" textLength="54.7" lengthAdjust="spacingAndGlyphs" >22 Feb 09:40</text>
<text x="651.4" y="562.8" font-size="9.8" fill="#fff" stroke="#fff" stroke-width="0.15" textLength="54.7" lengthAdjust="spacingAndGlyphs" >22 Feb 10:20</text>
<g shape-rendering="crispEdges">
<rect x="10" y="9" width="12" height="9" fill="#4a8aff"/>
<rect x="11" y="11" width="10" height="6" fill="#ffffff"/>
</g>
<path d="M12.3 13.6 L13.6 12.4 L14.8 13.6 M16 12.6 L17.2 12.4 L18.4 13.8" stroke="#4a8aff" fill="none" stroke-width="1.3"/>
<g shape-rendering="crispEdges">
<rect x="13" y="14" width="11" height="9" fill="#4a8aff"/>
<rect x="14" y="16" width="9" height="6" fill="#ffffff"/>
</g>
<path d="M15.2 17.2 L17.4 20.6 L19.3 17.2 L21.6 20.6" stroke="#4a8aff" fill="none" stroke-width="1.2"/>
<text x="29.4" y="20.8" font-size="12.5" fill="#0c0c18" stroke="#0c0c18" stroke-width="0" textLength="58.9" lengthAdjust="spacingAndGlyphs" >USDJPY,M5</text>
<rect x="624.5" y="7.5" width="31" height="17" rx="2.5" fill="url(#bt)" stroke="#5f6f8c" stroke-width="1"/>
<rect x="625.5" y="8.5" width="29" height="15" rx="1.5" fill="none" stroke="#ffffff" stroke-opacity="0.45" stroke-width="1"/>
<rect x="658.5" y="7.5" width="31" height="17" rx="2.5" fill="url(#bt)" stroke="#5f6f8c" stroke-width="1"/>
<rect x="659.5" y="8.5" width="29" height="15" rx="1.5" fill="none" stroke="#ffffff" stroke-opacity="0.45" stroke-width="1"/>
<rect x="692.5" y="7.5" width="31" height="17" rx="2.5" fill="url(#cl)" stroke="#4a1a2a" stroke-width="1"/>
<rect x="693.5" y="8.5" width="29" height="15" rx="1.5" fill="none" stroke="#ffffff" stroke-opacity="0.45" stroke-width="1"/>
<rect x="634.5" y="15.5" width="10" height="3.6" rx="1" fill="#f2f2ee" stroke="#4a5068" stroke-width="1"/>
<rect x="668.5" y="11.5" width="10" height="8" rx="1" fill="#f2f2ee" stroke="#4a5068" stroke-width="1"/>
<rect x="671.5" y="14.5" width="4" height="2" fill="#9fb6d2" stroke="#4a5068" stroke-width="1"/>
<polygon points="702.5,11.4 705.9,11.4 707.7,13.5 709.5,11.4 712.9,11.4 709.6,15.5 712.9,19.6 709.5,19.6 707.7,17.5 705.9,19.6 702.5,19.6 705.8,15.5" fill="#f6f6f6" stroke="#4b4f5c" stroke-width="1" stroke-linejoin="round"/>
</svg>
</body></html>
